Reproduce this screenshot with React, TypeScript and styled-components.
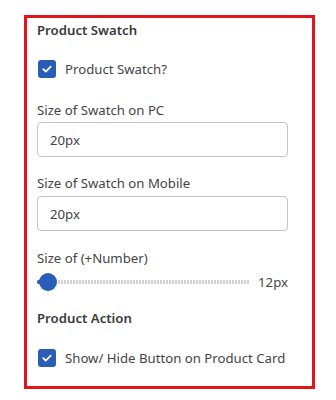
import React from "react";
import styled, { createGlobalStyle } from "styled-components";

const Global = createGlobalStyle`
  html, body { margin: 0; padding: 0; background: #fff; }
  body { font-family: "Noto Sans", "Open Sans", sans-serif; }
  * { box-sizing: border-box; }
`;

const Page = styled.div`
  padding: 15px 0 0 24px;
`;

const Panel = styled.section`
  width: 291px;
  height: 374px;
  border: 3px solid #e3151a;
  padding: 3px 24px 0 10px;
  display: flex;
  flex-direction: column;
`;

const Heading = styled.div<{ $mt?: number }>`
  font-size: 13.2px;
  line-height: 18px;
  font-weight: 600;
  color: #3a3a3a;
  margin-top: ${(p) => p.$mt ?? 0}px;
`;

const CheckRow = styled.label<{ $mt: number }>`
  display: flex;
  align-items: center;
  gap: 9px;
  height: 18px;
  margin-top: ${(p) => p.$mt}px;
  padding-left: 1px;
  font-size: 13.2px;
  color: #444;
  white-space: nowrap;
`;

const Box = styled.span`
  width: 18px;
  height: 18px;
  border-radius: 3px;
  background: #2a5db5;
  display: flex;
  align-items: center;
  justify-content: center;
  flex: none;
`;

const Label = styled.div<{ $mt: number }>`
  font-size: 13.2px;
  line-height: 18px;
  color: #444;
  margin-top: ${(p) => p.$mt}px;
`;

const Input = styled.div<{ $mt: number }>`
  height: 35px;
  margin-top: ${(p) => p.$mt}px;
  border: 1px solid #c4c4c4;
  border-radius: 4px;
  padding: 0 12px;
  display: flex;
  align-items: center;
  font-size: 13.2px;
  color: #444;
`;

const SliderRow = styled.div<{ $mt: number }>`
  display: flex;
  align-items: center;
  height: 18px;
  margin-top: ${(p) => p.$mt}px;
`;

const Track = styled.div`
  position: relative;
  flex: 1;
  height: 4px;
  margin-right: 9px;
  background: repeating-linear-gradient(
    to right,
    #d2d2d2 0 2px,
    transparent 2px 3px
  );
`;

const Fill = styled.div`
  position: absolute;
  left: 0;
  top: 0;
  height: 4px;
  width: 8px;
  background: #2a5db5;
  border-radius: 2px;
`;

const Thumb = styled.div`
  position: absolute;
  left: 2px;
  top: -7px;
  width: 18px;
  height: 18px;
  border-radius: 50%;
  background: #2a5db5;
`;

const Value = styled.span`
  font-size: 13.2px;
  color: #444;
  width: 30px;
  text-align: right;
`;

const Check = () => (
  <Box>
    <svg width="12" height="12" viewBox="0 0 12 12" fill="none">
      <path d="M2.3 6.2l2.4 2.4 5-5" stroke="#fff" strokeWidth="1.8" strokeLinecap="round" strokeLinejoin="round" />
    </svg>
  </Box>
);

export default function App() {
  return (
    <Page>
      <Global />
      <Panel>
        <Heading>Product Swatch</Heading>
        <CheckRow $mt={21}>
          <Check />
          Product Swatch?
        </CheckRow>
        <Label $mt={23}>Size of Swatch on PC</Label>
        <Input $mt={3}>20px</Input>
        <Label $mt={17}>Size of Swatch on Mobile</Label>
        <Input $mt={4}>20px</Input>
        <Label $mt={18}>Size of (+Number)</Label>
        <SliderRow $mt={6}>
          <Track>
            <Fill />
            <Thumb />
          </Track>
          <Value>12px</Value>
        </SliderRow>
        <Heading $mt={18}>Product Action</Heading>
        <CheckRow $mt={22}>
          <Check />
          Show/ Hide Button on Product Card
        </CheckRow>
      </Panel>
    </Page>
  );
}
